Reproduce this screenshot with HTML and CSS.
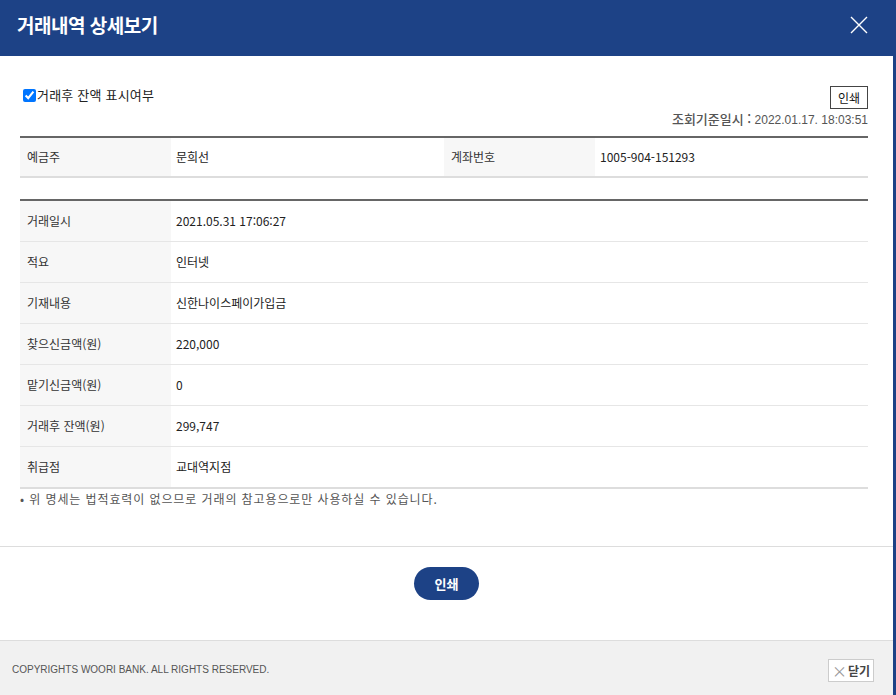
FILE: index.html
```html
<!DOCTYPE html>
<html lang="ko">
	<head>
		<meta charset="utf-8">
		<title>거래내역 상세보기</title>
		<link rel="stylesheet" href="styles.css">
	</head>
	<body>
		<div class="popup">
			<div class="pop-head">
				<h1>거래내역 상세보기</h1>
				<button type="button" class="btn-close" aria-label="닫기">
					<svg width="18" height="18" viewBox="0 0 18 18"><path d="M1 1L17 17M17 1L1 17" stroke="#fff" stroke-width="1.4" fill="none"/></svg>
				</button>
			</div>
			<div class="pop-body">
				<div class="top-bar">
					<label class="chk"><input type="checkbox" checked>거래후 잔액 표시여부</label>
					<div class="top-right">
						<button type="button" class="btn-small">인쇄</button>
						<p class="base-date"><b>조회기준일시 :</b> 2022.01.17. 18:03:51</p>
					</div>
				</div>

				<table class="tbl tbl-owner">
					<tr>
						<th>예금주</th>
						<td>문희선</td>
						<th>계좌번호</th>
						<td>1005-904-151293</td>
					</tr>
				</table>

				<table class="tbl tbl-detail">
					<tr><th>거래일시</th><td>2021.05.31 17:06:27</td></tr>
					<tr><th>적요</th><td>인터넷</td></tr>
					<tr><th>기재내용</th><td>신한나이스페이가입금</td></tr>
					<tr><th>찾으신금액(원)</th><td>220,000</td></tr>
					<tr><th>맡기신금액(원)</th><td>0</td></tr>
					<tr><th>거래후 잔액(원)</th><td>299,747</td></tr>
					<tr><th>취급점</th><td>교대역지점</td></tr>
				</table>
				<p class="note">• 위 명세는 법적효력이 없으므로 거래의 참고용으로만 사용하실 수 있습니다.</p>
			</div>
			<div class="btn-area">
				<button type="button" class="btn-print">인쇄</button>
			</div>
			<div class="pop-foot">
				<span class="copy">COPYRIGHTS WOORI BANK. ALL RIGHTS RESERVED.</span>
				<button type="button" class="btn-foot-close"><span class="x">×</span>닫기</button>
			</div>
		</div>
	</body>
</html>
```

FILE: styles.css
```css
html, body { margin: 0; padding: 0; }
body {
	font-family: "Noto Sans CJK KR", "Liberation Sans", sans-serif;
	font-size: 12px;
	color: #333;
	background: #fff;
}
button { font-family: inherit; cursor: pointer; }

.popup {
	height: 695px;
	display: flex;
	flex-direction: column;
	border-right: 3px solid #1d4286;
	box-sizing: border-box;
}

/* header */
.pop-head {
	height: 56px;
	background: #1d4286;
	display: flex;
	align-items: center;
	justify-content: space-between;
	padding: 0 25px 0 17px;
	flex-shrink: 0;
}
.pop-head h1 {
	margin: 0;
	color: #fff;
	font-size: 19px;
	font-weight: bold;
	letter-spacing: -0.5px;
	line-height: 1;
	margin-top: -8px;
}
.btn-close {
	background: none;
	border: 0;
	padding: 0;
	width: 18px;
	height: 18px;
	margin-top: -6px;
}
.btn-close svg { display: block; }

/* body */
.pop-body {
	padding: 30px 25px 0 20px;
	height: 460px;
	border-bottom: 1px solid #ddd;
	flex-shrink: 0;
}
.top-bar {
	display: flex;
	justify-content: space-between;
	align-items: flex-start;
}
.chk {
	display: flex;
	align-items: center;
	font-size: 13px;
	line-height: 16px;
	margin-top: 1px;
	color: #222;
	letter-spacing: 0.2px;
}
.chk input {
	margin: 0 1px 0 3px;
	width: 13px;
	height: 13px;
}
.top-right {
	display: flex;
	flex-direction: column;
	align-items: flex-end;
}
.btn-small {
	height: 23px;
	padding: 0 7px;
	border: 1px solid #444;
	background: #fff;
	font-size: 12px;
	color: #111;
	line-height: 21px;
}
.base-date {
	margin: 2px 0 0;
	line-height: 16px;
	font-size: 12px;
	color: #555;
	font-family: "Liberation Sans", "Noto Sans CJK KR", sans-serif;
}
.base-date b {
	font-family: "Noto Sans CJK KR", sans-serif;
	font-weight: 500;
	color: #555;
	font-size: 13px;
}

.tbl {
	width: 100%;
	border-collapse: collapse;
	border-top: 2px solid #666;
	border-bottom: 2px solid #ddd;
}
.tbl th, .tbl td {
	text-align: left;
	font-weight: normal;
	padding: 0 6px;
	font-size: 12px;
	line-height: 16px;
}
.tbl th {
	background: #f7f7f7;
	color: #333;
	width: 138px;
	padding-left: 7px;
}
.tbl td { color: #222; padding-left: 5px; }

.tbl-owner { margin-top: 8px; }
.tbl-owner th, .tbl-owner td { height: 38px; }
.tbl-owner td:nth-child(2) { width: 262px; }

.tbl-detail { margin-top: 21px; }
.tbl-detail th, .tbl-detail td {
	height: 40px;
	border-top: 1px solid #e6e6e6;
}
.tbl-detail tr:first-child th, .tbl-detail tr:first-child td { border-top: 0; }

.note {
	margin: 2px 0 0;
	font-size: 12px;
	color: #555;
	line-height: 16px;
	letter-spacing: 0.9px;
}

/* bottom button */
.btn-area {
	flex: 1;
	display: flex;
	justify-content: center;
	padding-top: 20px;
}
.btn-print {
	height: 33px;
	width: 65px;
	border: 0;
	border-radius: 17px;
	background: #1d4286;
	color: #fff;
	font-size: 13px;
	font-weight: bold;
}

/* footer */
.pop-foot {
	height: 54px;
	background: #f1f1f1;
	border-top: 1px solid #ddd;
	display: flex;
	align-items: center;
	justify-content: space-between;
	padding: 0 19px 0 12px;
	flex-shrink: 0;
}
.copy {
	font-family: "Liberation Sans", sans-serif;
	font-size: 10px;
	color: #555;
	margin-top: 3px;
}
.btn-foot-close {
	height: 23px;
	padding: 0 3px;
	border: 1px solid #ccc;
	background: #fff;
	font-size: 12px;
	font-weight: bold;
	color: #444;
	display: flex;
	align-items: center;
	margin-top: 4px;
}
.btn-foot-close .x {
	font-weight: normal;
	color: #999;
	font-size: 15px;
	margin-right: 1px;
	line-height: 1;
}
```
